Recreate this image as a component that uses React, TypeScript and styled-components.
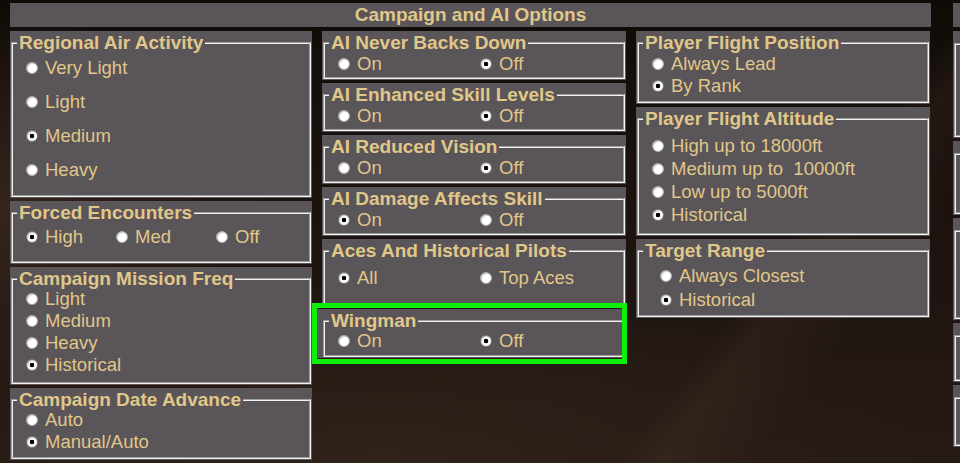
import React from 'react';
import styled, { createGlobalStyle, css } from 'styled-components';

const PANEL = '#5a5558';
const GOLD = '#e0c78a';

const GlobalStyle = createGlobalStyle`
  html, body {
    margin: 0;
    padding: 0;
  }

  body {
    width: 960px;
    height: 463px;
    overflow: hidden;
    font-family: 'Liberation Sans', Arial, sans-serif;
    background:
      linear-gradient(128deg, transparent 0 74%, rgba(95, 72, 56, 0.16) 77%, transparent 84%),
      radial-gradient(ellipse 40% 60% at 0% 45%, rgba(74, 52, 38, 0.55), transparent 70%),
      radial-gradient(ellipse 70% 50% at 40% 100%, rgba(60, 42, 32, 0.5), transparent 80%),
      linear-gradient(180deg, #110b08 0%, #1a110d 35%, #261a14 100%);
  }
`;

const Page = styled.div`
  display: flex;
  gap: 22px;
  height: 463px;
  padding: 3px 0 0 10px;
  box-sizing: border-box;
  overflow: hidden;
`;

const Screen = styled.div<{ $w: number }>`
  flex: 0 0 ${(p) => p.$w}px;
  display: flex;
  flex-direction: column;
  gap: 4px;
`;

const TitleBar = styled.header`
  height: 24px;
  background: ${PANEL};
  color: ${GOLD};
  font-weight: bold;
  font-size: 19px;
  line-height: 24px;
  text-align: center;
`;

const Columns = styled.div`
  display: grid;
  grid-template-columns: 302px 304px 294px;
  column-gap: 10px;
  align-items: start;
`;

const Column = styled.div`
  display: flex;
  flex-direction: column;
  gap: 3px;
`;

const Box = styled.section<{ $h: number; $highlight?: boolean }>`
  position: relative;
  display: flex;
  flex-direction: column;
  height: ${(p) => p.$h}px;
  padding: 2px 1px 1px 1px;
  box-sizing: border-box;
  background: ${PANEL};

  ${(p) =>
    p.$highlight &&
    css`
      box-shadow: -6px 0 0 ${PANEL};

      &::after {
        content: '';
        position: absolute;
        top: -6px;
        bottom: -6px;
        left: -10px;
        right: -1px;
        border: 5px solid #0cf00c;
        pointer-events: none;
      }
    `}
`;

const Frame = styled.fieldset<{ $bare?: boolean }>`
  flex: 1;
  min-width: 0;
  margin: ${(p) => (p.$bare ? '10px 0 0 0' : '0')};
  padding: 0;
  border: 2px groove #f2f2f2;
`;

const Legend = styled.legend`
  margin-left: 4px;
  padding: 0 2px;
  color: ${GOLD};
  font-weight: bold;
  font-size: 19px;
  line-height: 20px;
  white-space: nowrap;
`;

const Options = styled.div<{ $top: number; $gap: number; $indent?: number; $cols?: string }>`
  display: grid;
  grid-template-columns: ${(p) => p.$cols ?? '1fr'};
  row-gap: ${(p) => p.$gap}px;
  padding: ${(p) => p.$top}px 0 0 ${(p) => p.$indent ?? 13}px;
`;

const Option = styled.label`
  display: flex;
  align-items: center;
  gap: 7px;
  height: 20px;
  color: ${GOLD};
  font-size: 18.5px;
  line-height: 20px;
  white-space: pre;
`;

const Radio = styled.input.attrs({ type: 'radio' })`
  appearance: none;
  flex: 0 0 12px;
  width: 12px;
  height: 12px;
  margin: 0;
  border-radius: 50%;
  box-sizing: border-box;
  border: 1px solid #a9a7a9;
  background: #ffffff;
  box-shadow: inset 1px 1px 0 rgba(0, 0, 0, 0.18);

  &:checked {
    border-color: #7e7c7e;
    background: radial-gradient(circle, #000 0 2px, #fff 2.6px);
  }
`;

type Group = {
  title?: string;
  h: number;
  top?: number;
  gap?: number;
  indent?: number;
  cols?: string;
  options?: string[];
  selected?: number;
  highlight?: boolean;
};

const Panel: React.FC<{ group: Group; id: string }> = ({ group, id }) => (
  <Box $h={group.h} $highlight={group.highlight}>
    <Frame $bare={!group.title}>
      {group.title && <Legend>{group.title}</Legend>}
      {group.options && (
        <Options
          $top={group.top ?? 0}
          $gap={group.gap ?? 2}
          $indent={group.indent}
          $cols={group.cols}
        >
          {group.options.map((o, i) => (
            <Option key={o}>
              <Radio name={id} defaultChecked={i === group.selected} />
              {o}
            </Option>
          ))}
        </Options>
      )}
    </Frame>
  </Box>
);

const onOff = ['On', 'Off'];

const columns: Group[][] = [
  [
    {
      title: 'Regional Air Activity',
      h: 167,
      top: 5,
      gap: 14,
      options: ['Very Light', 'Light', 'Medium', 'Heavy'],
      selected: 2,
    },
    {
      title: 'Forced Encounters',
      h: 63,
      top: 4,
      cols: '90px 100px auto',
      options: ['High', 'Med', 'Off'],
      selected: 0,
    },
    {
      title: 'Campaign Mission Freq',
      h: 118,
      top: 0,
      gap: 2,
      options: ['Light', 'Medium', 'Heavy', 'Historical'],
      selected: 3,
    },
    {
      title: 'Campaign Date Advance',
      h: 72,
      top: 0,
      gap: 2,
      options: ['Auto', 'Manual/Auto'],
      selected: 1,
    },
  ],
  [
    { title: 'AI Never Backs Down', h: 49, top: 1, cols: '142px auto', options: onOff, selected: 1 },
    { title: 'AI Enhanced Skill Levels', h: 49, top: 1, cols: '142px auto', options: onOff, selected: 1 },
    { title: 'AI Reduced Vision', h: 49, top: 1, cols: '142px auto', options: onOff, selected: 1 },
    { title: 'AI Damage Affects Skill', h: 49, top: 1, cols: '142px auto', options: onOff, selected: 0 },
    {
      title: 'Aces And Historical Pilots',
      h: 67,
      top: 7,
      cols: '142px auto',
      options: ['All', 'Top Aces'],
      selected: 0,
    },
    { title: 'Wingman', h: 49, top: 0, cols: '142px auto', options: onOff, selected: 1, highlight: true },
  ],
  [
    {
      title: 'Player Flight Position',
      h: 73,
      top: 1,
      gap: 2,
      options: ['Always Lead', 'By Rank'],
      selected: 1,
    },
    {
      title: 'Player Flight Altitude',
      h: 129,
      top: 7,
      gap: 3,
      options: ['High up to 18000ft', 'Medium up to  10000ft', 'Low up to 5000ft', 'Historical'],
      selected: 3,
    },
    {
      title: 'Target Range',
      h: 79,
      top: 5,
      gap: 4,
      indent: 21,
      options: ['Always Closest', 'Historical'],
      selected: 1,
    },
  ],
];

const sidePanels: Group[] = [{ h: 107 }, { h: 74 }, { h: 102 }, { h: 59 }, { h: 62 }];

export default function App() {
  return (
    <>
      <GlobalStyle />
      <Page>
        <Screen $w={921}>
          <TitleBar>Campaign and AI Options</TitleBar>
          <Columns>
            {columns.map((col, ci) => (
              <Column key={ci}>
                {col.map((g, gi) => (
                  <Panel key={gi} group={g} id={`c${ci}-${gi}`} />
                ))}
              </Column>
            ))}
          </Columns>
        </Screen>
        <Screen $w={300}>
          <TitleBar />
          <Column>
            {sidePanels.map((g, i) => (
              <Panel key={i} group={g} id={`s${i}`} />
            ))}
          </Column>
        </Screen>
      </Page>
    </>
  );
}
